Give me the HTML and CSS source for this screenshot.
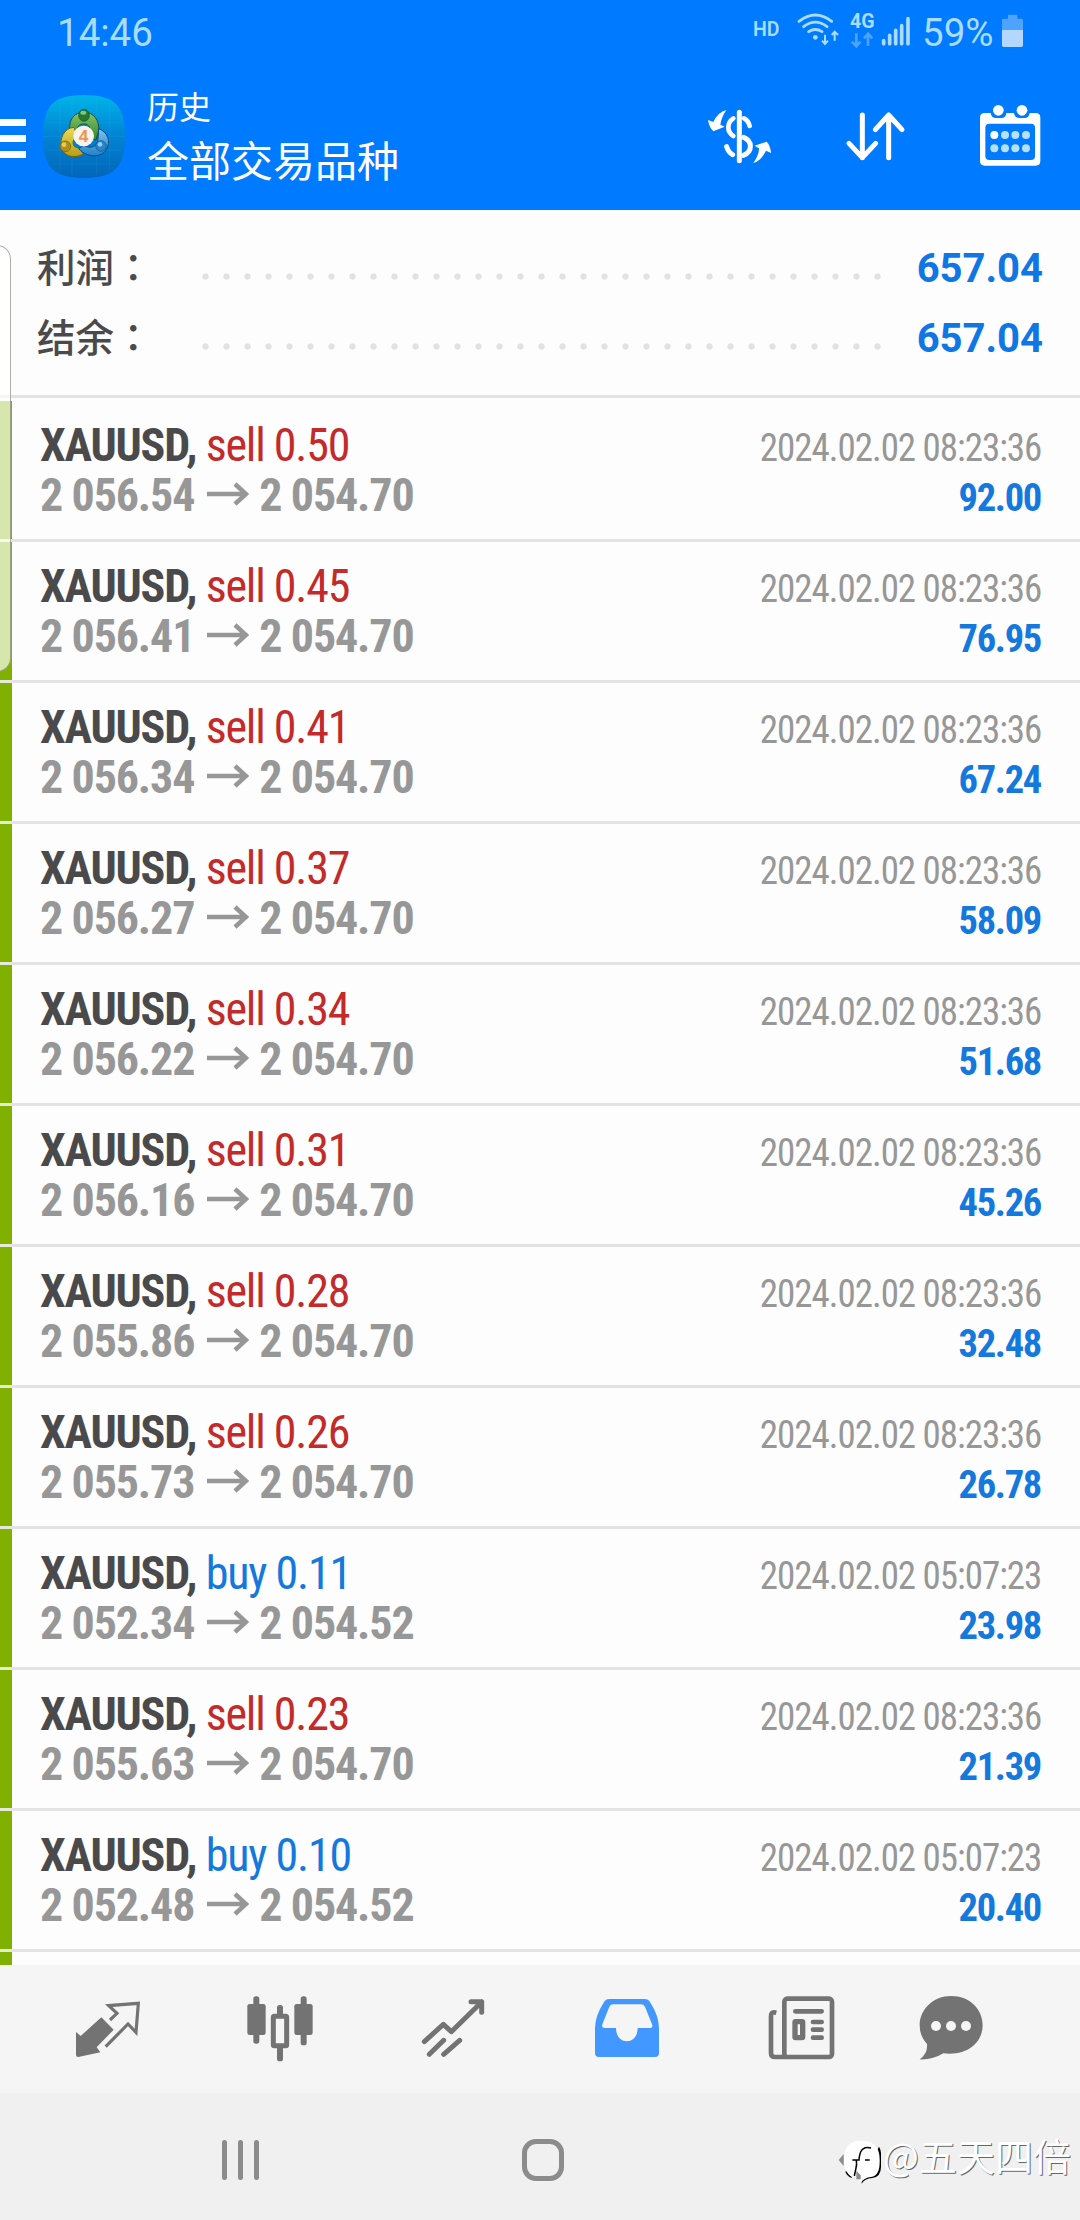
FILE: index.html
```html
<!DOCTYPE html>
<html lang="zh-CN">
<head>
<meta charset="utf-8">
<title>历史</title>
<link rel="stylesheet" href="styles.css">
</head>
<body>
<header class="header">
  <div class="status">
    <span class="clock">14:46</span>
    <div class="indicators">
      <span class="hd">HD</span>
      <svg class="wifi" viewBox="408 36 132 102">
        <g fill="none" stroke="#a9dcff" stroke-width="8.500" stroke-linecap="round">
          <path d="M414 64Q463 26 512 64M428 80Q463 53 498 80M443 95Q463 82 483 95"/>
        </g>
        <circle cx="463" cy="112" r="7" fill="#a9dcff"/>
        <path d="M492 104V130M483 122L492 132L501 122M521 122V97M512 105L521 95L531 105" fill="none" stroke="#a9dcff" stroke-width="6"/>
      </svg>
      <div class="network">
        <span class="network-type">4G</span>
        <svg class="network-data" viewBox="568 94 72 48">
          <path d="M587 98V136M574 123L587 137L599 123M622 136V101M610 113L622 99L635 113" fill="none" stroke="#4da3ff" stroke-width="8"/>
        </svg>
      </div>
      <svg class="signal" viewBox="660 48 90 90">
        <path d="M668 122V131M686 106V131M704 91V131M722 77V131M741 56V131" stroke="#a9dcff" stroke-width="11" stroke-linecap="round"/>
      </svg>
      <span class="percent">59%</span>
      <svg class="battery" viewBox="1023 42 69 99">
        <path d="M1044 44H1072V56H1085Q1089 56 1089 60V92H1026V60Q1026 56 1030 56H1044Z" fill="#4da3ff"/>
        <path d="M1026 90H1089V136Q1089 141 1084 141H1031Q1026 141 1026 136Z" fill="#b3d7ff"/>
      </svg>
    </div>
  </div>
  <div class="appbar">
    <div class="menu"><i></i><i></i><i></i></div>
    <svg class="logo" viewBox="126 42 252 255">
      <defs>
        <linearGradient id="bg" x1="0" y1="0" x2="0" y2="1"><stop offset="0" stop-color="#00b4e8"/><stop offset=".45" stop-color="#0187d6"/><stop offset="1" stop-color="#0365b8"/></linearGradient>
        <linearGradient id="green" x1="0" y1="0" x2="0" y2="1"><stop offset="0" stop-color="#8cc26a"/><stop offset="1" stop-color="#2c8a2c"/></linearGradient>
        <linearGradient id="gold" x1="0" y1="0" x2="0" y2="1"><stop offset="0" stop-color="#e8dc5a"/><stop offset="1" stop-color="#b99c14"/></linearGradient>
        <linearGradient id="sky" x1="0" y1="0" x2="0" y2="1"><stop offset="0" stop-color="#7cc4ea"/><stop offset="1" stop-color="#2481cc"/></linearGradient>
      </defs>
      <path d="M252 45C345 45 375 78 375 169S345 294 252 294S129 260 129 169S159 45 252 45Z" fill="url(#bg)"/>
      <path d="M145 128H365M129 169H375M145 210H365M160 252H345M180 70V270M216 55V285M290 55V285M328 70V270" stroke="#5ccbf0" stroke-opacity=".22" stroke-width="1.500"/>
      <g stroke-linejoin="round">
        <path d="M210 150C204 120 224 96 252 96S300 122 296 152L288 180L270 176C276 148 268 132 252 132S230 140 232 160Z" fill="url(#green)" stroke="#164f3e" stroke-width="3"/>
        <path d="M222 142C192 144 178 176 184 204C194 232 226 236 250 222L238 204C214 204 214 178 232 170Z" fill="url(#gold)" stroke="#6d6414" stroke-width="3"/>
        <path d="M296 146C324 156 334 186 318 210C304 232 264 236 236 206L252 196C276 210 292 196 294 178Z" fill="url(#sky)" stroke="#0b4a84" stroke-width="3"/>
      </g>
      <ellipse cx="252" cy="106" rx="16" ry="18" fill="#237a2e" stroke="#14542c" stroke-width="2"/>
      <ellipse cx="250" cy="98" rx="9" ry="6" fill="#7fc481"/>
      <circle cx="196" cy="199" r="16" fill="#b38f15" stroke="#6e5b14" stroke-width="2"/>
      <circle cx="192" cy="194" r="7" fill="#e2cc61"/>
      <circle cx="303" cy="198" r="16" fill="#2a83c9" stroke="#0e5190" stroke-width="2"/>
      <circle cx="300" cy="193" r="7" fill="#8fd0f4"/>
      <circle cx="251" cy="168" r="31" fill="#f7f4ee"/>
      <text x="251" y="187" text-anchor="middle" class="logo-number">4</text>
    </svg>
    <div class="titles">
      <span class="title">历史</span>
      <span class="subtitle">全部交易品种</span>
    </div>
    <div class="actions">
      <svg viewBox="132 300 216 216">
        <g fill="none" stroke="#fff" stroke-linecap="round">
          <path d="M238 337V482" stroke-width="15"/>
          <path d="M220 355C200 368 200 396 220 408M252 355Q265 361 269 378" stroke-width="14"/>
          <path d="M200 440Q206 458 218 464M251 412C277 422 279 456 250 466" stroke-width="15"/>
        </g>
        <path d="M199 330Q174 336 160 366L144 360Q148 383 160 394L194 380L181 374Q184 352 199 330ZM280 489Q302 484 318 452L333 459Q331 436 320 425L284 437L297 445Q297 466 280 489Z" fill="#fff"/>
      </svg>
      <svg viewBox="537 300 216 216">
        <path d="M607 345V473M567 430L607 473L647 430M686 473V345M646 389L686 345L726 389" fill="none" stroke="#fff" stroke-width="15" stroke-linecap="round" stroke-linejoin="round"/>
      </svg>
      <svg viewBox="942 300 216 216">
        <path fill="#fff" fill-rule="evenodd" d="M974 339H992Q994 354 1008 354H1024Q1038 354 1039 339H1062Q1064 354 1078 354H1094Q1107 354 1109 339H1127Q1141 339 1141 353V483Q1141 497 1127 497H974Q960 497 960 483V353Q960 339 974 339ZM988 371Q976 371 976 383V468Q976 480 988 480H1113Q1125 480 1125 468V383Q1125 371 1113 371Z"/>
        <g fill="#fff"><circle cx="1015" cy="331" r="16"/><circle cx="1086" cy="331" r="16"/><circle cx="1003" cy="405" r="12"/></g>
        <g fill="#b5e0ff"><circle cx="1035" cy="405" r="12"/><circle cx="1066" cy="405" r="12"/><circle cx="1098" cy="405" r="12"/><circle cx="1003" cy="445" r="12"/><circle cx="1035" cy="445" r="12"/><circle cx="1066" cy="445" r="12"/><circle cx="1098" cy="445" r="12"/></g>
      </svg>
    </div>
  </div>
</header>

<main class="history">
  <section class="summary">
    <div class="total"><span class="label">利润<span lang="zh-TW">：</span></span><i class="leader"></i><b class="value">657.04</b></div>
    <div class="total"><span class="label">结余<span lang="zh-TW">：</span></span><i class="leader"></i><b class="value">657.04</b></div>
  </section>
  <ul class="deals" id="deals"></ul>
  <div class="edge-handle"></div>
</main>

<nav class="tabs">
  <svg viewBox="36 39 216 216">
    <path d="M124 112L161 149L110 202L121 217L55 231Q48 231 48 225V156L62 168Z" fill="#737373"/>
    <path d="M150 120L171 100L146 77L235 70L228 157L204 132L137 200" fill="none" stroke="#737373" stroke-width="9.500"/>
  </svg>
  <svg viewBox="552 39 216 216">
    <g fill="#737373">
      <rect x="562" y="72" width="55" height="93" rx="7"/><rect x="703" y="72" width="55" height="93" rx="7"/>
      <rect x="580" y="49" width="18" height="142" rx="8"/><rect x="722" y="49" width="18" height="147" rx="8"/>
      <rect x="651" y="75" width="18" height="40" rx="8"/><rect x="651" y="190" width="18" height="54" rx="8"/>
    </g>
    <rect x="640" y="109" width="40" height="88" rx="3" fill="#f5f5f5" stroke="#737373" stroke-width="15"/>
  </svg>
  <svg viewBox="54 39 216 216">
    <path d="M73 185L130 133L154 155L245 66M213 65H245V97M88 223L131 181M131 223L179 181" fill="none" stroke="#737373" stroke-width="15" stroke-linecap="round" stroke-linejoin="round"/>
  </svg>
  <svg viewBox="573 39 216 216">
    <path fill="#4298ff" fill-rule="evenodd" d="M628 57H734Q745 57 750 66Q777 108 777 145V219Q777 231 765 231H597Q585 231 585 219V145Q585 108 612 66Q617 57 628 57ZM640 73Q631 73 628 80L607 133Q604 144 614 144H648C648 197 713 197 713 144H748Q760 144 756 133L735 80Q731 73 723 73Z"/>
  </svg>
  <svg viewBox="48 39 216 216">
    <g fill="none" stroke="#737373" stroke-width="14" stroke-linecap="round">
      <rect x="103" y="56" width="143" height="175" rx="9"/>
      <path d="M79 98Q63 94 63 108V219Q63 231 75 231H110" stroke-linecap="butt"/>
      <path d="M136 94H215M189 126H215M189 149H215M189 173H215"/>
      <rect x="135" y="125" width="23" height="48" rx="2" stroke-width="16"/>
    </g>
  </svg>
  <svg viewBox="495 39 216 216">
    <path d="M603 48C660 48 698 88 698 136S656 229 580 220Q548 240 509 238Q534 220 531 192Q509 168 509 136C509 88 550 48 603 48Z" fill="#737373"/>
    <g fill="#f5f5f5"><circle cx="558" cy="138" r="15"/><circle cx="603" cy="138" r="15"/><circle cx="648" cy="138" r="15"/></g>
  </svg>
</nav>

<footer class="system-nav">
  <div class="recents"><i></i><i></i><i></i></div>
  <div class="home"></div>
  <div class="signature">
    <svg viewBox="36 54 138 144">
      <path d="M41 120L56 102V138Z" fill="#8c8c8c"/>
      <path d="M110 191Q118 176 142 174Q168 170 168 140V100Q168 90 162 80L110 176Z" fill="#000"/>
      <path d="M80 174Q66 168 61 155L84 140Z" fill="#000"/>
      <path d="M108 62Q164 62 164 118Q166 168 138 171Q118 173 108 187L100 168L84 173Q56 160 57 118Q57 62 108 62Z" fill="#fff"/>
      <path d="M138 84Q114 78 106 98Q102 112 102 120H82M94 122Q96 134 93 144L88 168M120 120H134" fill="none" stroke="#000" stroke-width="4.500"/>
      <path d="M94 152L107 166V178H94Z" fill="#8c8c8c"/>
    </svg>
    <span>@五天四倍</span>
  </div>
</footer>
<script src="deals.js"></script>
</body>
</html>
```
FILE: deals.js
```js
const deals = [
  ["sell", "0.50", "2 056.54", "2 054.70", "08:23:36", "92.00"],
  ["sell", "0.45", "2 056.41", "2 054.70", "08:23:36", "76.95"],
  ["sell", "0.41", "2 056.34", "2 054.70", "08:23:36", "67.24"],
  ["sell", "0.37", "2 056.27", "2 054.70", "08:23:36", "58.09"],
  ["sell", "0.34", "2 056.22", "2 054.70", "08:23:36", "51.68"],
  ["sell", "0.31", "2 056.16", "2 054.70", "08:23:36", "45.26"],
  ["sell", "0.28", "2 055.86", "2 054.70", "08:23:36", "32.48"],
  ["sell", "0.26", "2 055.73", "2 054.70", "08:23:36", "26.78"],
  ["buy", "0.11", "2 052.34", "2 054.52", "05:07:23", "23.98"],
  ["sell", "0.23", "2 055.63", "2 054.70", "08:23:36", "21.39"],
  ["buy", "0.10", "2 052.48", "2 054.52", "05:07:23", "20.40"]
];

document.getElementById("deals").innerHTML = deals.map(([side, lots, open, close, time, profit]) => `
  <li class="deal">
    <div class="line">
      <span class="name"><b>XAUUSD,</b> <span class="${side}">${side} ${lots}</span></span>
      <span class="time">2024.02.02 ${time}</span>
    </div>
    <div class="line">
      <span class="prices">${open}<svg class="arrow" viewBox="0 0 42 24"><path d="M0 12H38M28 2L39 12L28 22" fill="none" stroke="#979798" stroke-width="4.500"/></svg>${close}</span>
      <b class="profit">${profit}</b>
    </div>
  </li>`).join("") + '<li class="deal"></li>';
```
FILE: styles.css
```css
* { box-sizing: border-box; }
body {
  margin: 0;
  width: 1080px;
  height: 2220px;
  display: flex;
  flex-direction: column;
  overflow: hidden;
  background: #fdfdfe;
  font-family: Roboto, "Noto Sans CJK SC", sans-serif;
}
svg { display: block; flex: none; }
i { font-style: normal; }

.header {
  height: 210px;
  background: #007aff;
  border-bottom: 1px solid #1f6fd0;
  color: #fff;
}
.status {
  height: 70px;
  padding: 0 56px 0 57px;
  display: flex;
  justify-content: space-between;
  color: #a9dcff;
}
.clock, .percent { font-size: 38.5px; line-height: 65px; }
.percent { width: 73px; margin: 0 6px 0 11px; }
.indicators { display: flex; }
.hd { width: 44px; font-size: 19.5px; font-weight: 600; line-height: 60px; }
.wifi { width: 44px; height: 34px; margin-top: 12px; }
.network { margin: 11px 6px 0 9px; width: 25px; }
.network-type { display: block; font-size: 19.5px; font-weight: 700; line-height: 22px; }
.network-data { width: 24px; height: 16px; margin-top: -1px; }
.signal { width: 30px; height: 30px; margin-top: 16px; }
.battery { width: 23px; height: 33px; margin-top: 14px; }

.appbar { height: 140px; display: flex; }
.menu { width: 42px; padding-top: 49px; display: flex; flex-direction: column; gap: 9px; }
.menu i { width: 26px; height: 7px; background: #fff; }
.logo { width: 84px; height: 85px; margin-top: 24px; }
.logo-number { font: 700 52px "Liberation Sans", sans-serif; fill: #ee9450; }
.titles {
  margin-left: 21px;
  padding-top: 13px;
  display: flex;
  flex-direction: column;
  font-family: "Noto Sans CJK SC", sans-serif;
}
.title { font-size: 32px; line-height: 44px; }
.subtitle { font-size: 42px; line-height: 64px; }
.actions { margin-left: auto; padding: 30px 34px 0 0; display: flex; gap: 63px; }
.actions svg { width: 72px; height: 72px; }

.history { position: relative; height: 1755px; overflow: hidden; }
.summary { height: 188px; padding: 20px 37px 0 37px; border-bottom: 3px solid #e3e3e3; }
.total { height: 70px; display: flex; align-items: center; }
.label {
  width: 165px;
  color: #4a4a4c;
  font: 500 38.5px/70px "Noto Sans CJK SC", sans-serif;
}
.label span { font-family: "Noto Sans CJK TC", sans-serif; }
.leader {
  width: 679px;
  height: 7px;
  margin-top: 23px;
  background: radial-gradient(circle 3.500px at 3.500px 3.500px, #e2e2e2 2.800px, transparent 3.500px) 0 0 / 21px 7px repeat-x;
}
.value { margin-left: auto; padding-top: 7px; font-size: 40px; color: #0f76e4; }

.deals { list-style: none; margin: 3px 0 0; padding: 0; }
.deal {
  height: 141px;
  padding: 19px 39px 0 28px;
  border-left: 12px solid #80b000;
  background: linear-gradient(#e3e3e3, #e3e3e3) 0 100% / 100% 3px no-repeat border-box;
  border-image: linear-gradient(#80b000 138px, #e6eadb 138px) 0 0 0 12;
}
.line {
  height: 50px;
  display: flex;
  justify-content: space-between;
  align-items: baseline;
  line-height: 50px;
  white-space: pre;
  font-family: "Roboto Condensed", Roboto, sans-serif;
}
.name { font-size: 46px; letter-spacing: -1.2px; }
.name b { color: #4a4a4c; }
.sell { color: #c32a2a; }
.buy { color: #1478dc; }
.time {
  font-size: 38.5px;
  color: #979797;
  letter-spacing: -1.05px;
  transform: scaleX(.96);
  transform-origin: 100% 50%;
}
.prices {
  display: flex;
  align-items: baseline;
  font-size: 46px;
  font-weight: 700;
  letter-spacing: -1.15px;
  color: #979798;
}
.arrow { width: 42px; height: 24px; margin: 0 10px 0 13px; transform: translateY(-5px); }
.profit { font-size: 38.5px; letter-spacing: -1.3px; color: #1478dc; }

.edge-handle {
  position: absolute;
  left: -20px;
  top: 35px;
  width: 31px;
  height: 427px;
  border: 1px solid rgba(90, 100, 80, .5);
  border-radius: 14px;
  background: rgba(255, 255, 255, .68);
}

.tabs {
  height: 128px;
  padding-left: 72px;
  display: grid;
  grid-template-columns: 172px 174px 173px 175px 149px 165px;
  align-items: center;
  background: #f5f5f5;
}
.tabs svg { width: 72px; height: 72px; }

.system-nav {
  height: 127px;
  padding: 0 9px 0 222px;
  display: flex;
  background: #f0f0f0;
}
.recents { width: 300px; padding-top: 47px; display: flex; gap: 11px; }
.recents i { width: 5px; height: 40px; border-radius: 3px; background: #8c8c8c; }
.home { width: 42px; height: 42px; margin-top: 46px; border: 5px solid #8c8c8c; border-radius: 14px; }
.signature {
  margin-left: auto;
  padding-top: 45px;
  display: flex;
  color: #fff;
  font: 400 38px/44px "Noto Sans CJK SC", sans-serif;
  text-shadow: 1px 1px 0 #666;
}
.signature svg { width: 46px; height: 48px; }
.signature span { margin-top: -5px; }
```
